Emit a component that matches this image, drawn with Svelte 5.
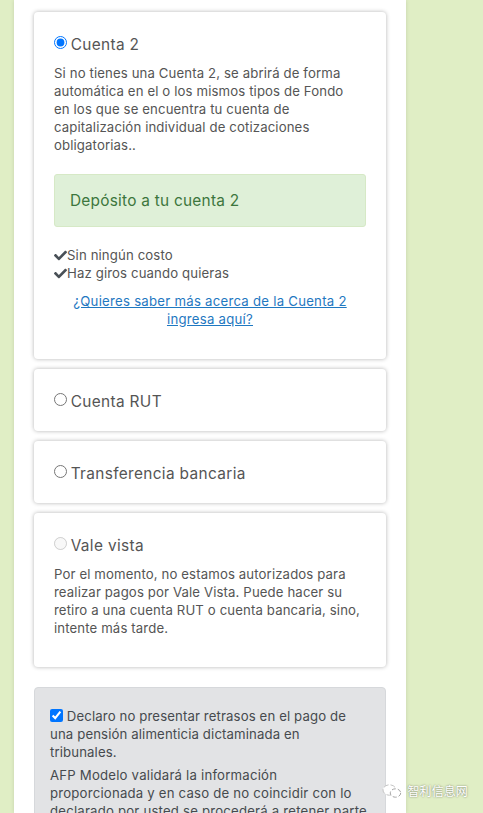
<script>
  const accounts = [
    { name: 'Cuenta RUT' },
    { name: 'Transferencia bancaria' }
  ];
  const perks = ['Sin ningún costo', 'Haz giros cuando quieras'];
</script>

<div class="page">
  <main class="column">
    <section class="card">
      <label class="title"><input type="radio" name="pago" checked /> Cuenta 2</label>
      <p>Si no tienes una Cuenta 2, se abrirá de forma automática en el o los mismos tipos de Fondo en los que se encuentra tu cuenta de capitalización individual de cotizaciones obligatorias..</p>
      <div class="alert">Depósito a tu cuenta 2</div>
      <ul>
        {#each perks as perk}
          <li>
            <svg viewBox="0 0 512 512" width="13" height="13" aria-hidden="true">
              <path d="M173.898 439.404l-166.4-166.4c-9.997-9.997-9.997-26.206 0-36.204l36.203-36.204c9.997-9.998 26.207-9.998 36.204 0L192 312.69 432.095 72.596c9.997-9.997 26.207-9.997 36.204 0l36.203 36.204c9.997 9.997 9.997 26.206 0 36.204l-294.4 294.401c-9.998 9.997-26.207 9.997-36.204-.001z" />
            </svg>{perk}
          </li>
        {/each}
      </ul>
      <a href="#cuenta2">¿Quieres saber más acerca de la Cuenta 2 ingresa aquí?</a>
    </section>

    {#each accounts as account}
      <section class="card">
        <label class="title"><input type="radio" name="pago" /> {account.name}</label>
      </section>
    {/each}

    <section class="card">
      <label class="title"><input type="radio" name="pago" disabled /> Vale vista</label>
      <p>Por el momento, no estamos autorizados para realizar pagos por Vale Vista. Puede hacer su retiro a una cuenta RUT o cuenta bancaria, sino, intente más tarde.</p>
    </section>

    <section class="notice">
      <label><input type="checkbox" checked /> Declaro no presentar retrasos en el pago de una pensión alimenticia dictaminada en tribunales.</label>
      <p>AFP Modelo validará la información<br />proporcionada y en caso de no coincidir con lo declarado por usted se procederá a retener parte de su retiro.</p>
    </section>
  </main>

  <div class="watermark">
    <svg viewBox="0 0 20 14" width="20" height="14" aria-hidden="true">
      <ellipse class="back" cx="7.5" cy="6" rx="6.5" ry="5.2" />
      <ellipse class="front" cx="13.5" cy="9" rx="5.2" ry="4.2" />
    </svg>
    <span>智利信息网</span>
  </div>
</div>

<style>
  :global(body) {
    background: #e0eec5;
  }

  .page {
    position: relative;
    height: 813px;
    overflow: hidden;
    font-family: Inter, "Noto Sans", sans-serif;
    font-size: 13.2px;
    letter-spacing: 0.12px;
    line-height: 18px;
    color: #555;
  }

  .column {
    box-sizing: border-box;
    width: 392px;
    margin-left: 14px;
    padding: 12px 20px 0;
    background: #fff;
    height: 100%;
    box-shadow: 0 0 4px rgba(0, 0, 0, 0.12);
    display: flex;
    flex-direction: column;
    gap: 10px;
  }

  .card {
    flex: none;
    padding: 20px 20px 18px;
    background: #fff;
    border-radius: 4px;
    box-shadow: 0 0 4px rgba(0, 0, 0, 0.3);
  }

  .title {
    display: block;
    height: 24px;
    font-size: 15.4px;
    letter-spacing: 0.35px;
    line-height: 26px;
  }

  .title input {
    margin: 0 -1px 0 0;
    vertical-align: 1px;
  }

  p {
    max-width: 307px;
    margin: 8px 0 12px;
  }

  .alert {
    height: 51px;
    margin: 20px 0 19px;
    padding: 0 15px;
    border: 1px solid #d6e9c6;
    border-radius: 3px;
    background: #dff0d8;
    color: #3c763d;
    font-size: 15.4px;
    letter-spacing: 0.25px;
    line-height: 51px;
  }

  ul {
    margin: 0 0 10px;
    padding: 0;
    list-style: none;
  }

  li svg {
    vertical-align: -2px;
  }

  li path {
    fill: #495057;
  }

  a {
    display: block;
    margin: 0 12px 13px;
    color: #1f78c1;
    letter-spacing: 0.25px;
    text-align: center;
  }

  .notice {
    flex: none;
    margin-top: 10px;
    padding: 19px 15px;
    border: 1px solid #d6d8db;
    border-radius: 4px;
    background: #e2e3e5;
    color: #464a4e;
  }

  .notice label {
    display: block;
    padding-right: 20px;
  }

  .notice input {
    margin: 0;
    vertical-align: -1px;
  }

  .notice p {
    max-width: none;
    margin: 5px 0 0;
    letter-spacing: 0.2px;
  }

  .watermark {
    position: absolute;
    right: 15px;
    top: 782px;
    display: flex;
    align-items: center;
    gap: 5px;
    color: #fff;
    font-family: "Noto Sans CJK SC", sans-serif;
    font-size: 12px;
    text-shadow: 0 0 2px rgba(0, 0, 0, 0.55);
  }

  .back {
    fill: #fff;
    stroke: #c4c4c4;
    stroke-width: 1;
    stroke-dasharray: 5 2;
  }

  .front {
    fill: #fff;
    stroke: #9a9a9a;
    stroke-width: 0.9;
    stroke-dasharray: 4 2;
  }
</style>
